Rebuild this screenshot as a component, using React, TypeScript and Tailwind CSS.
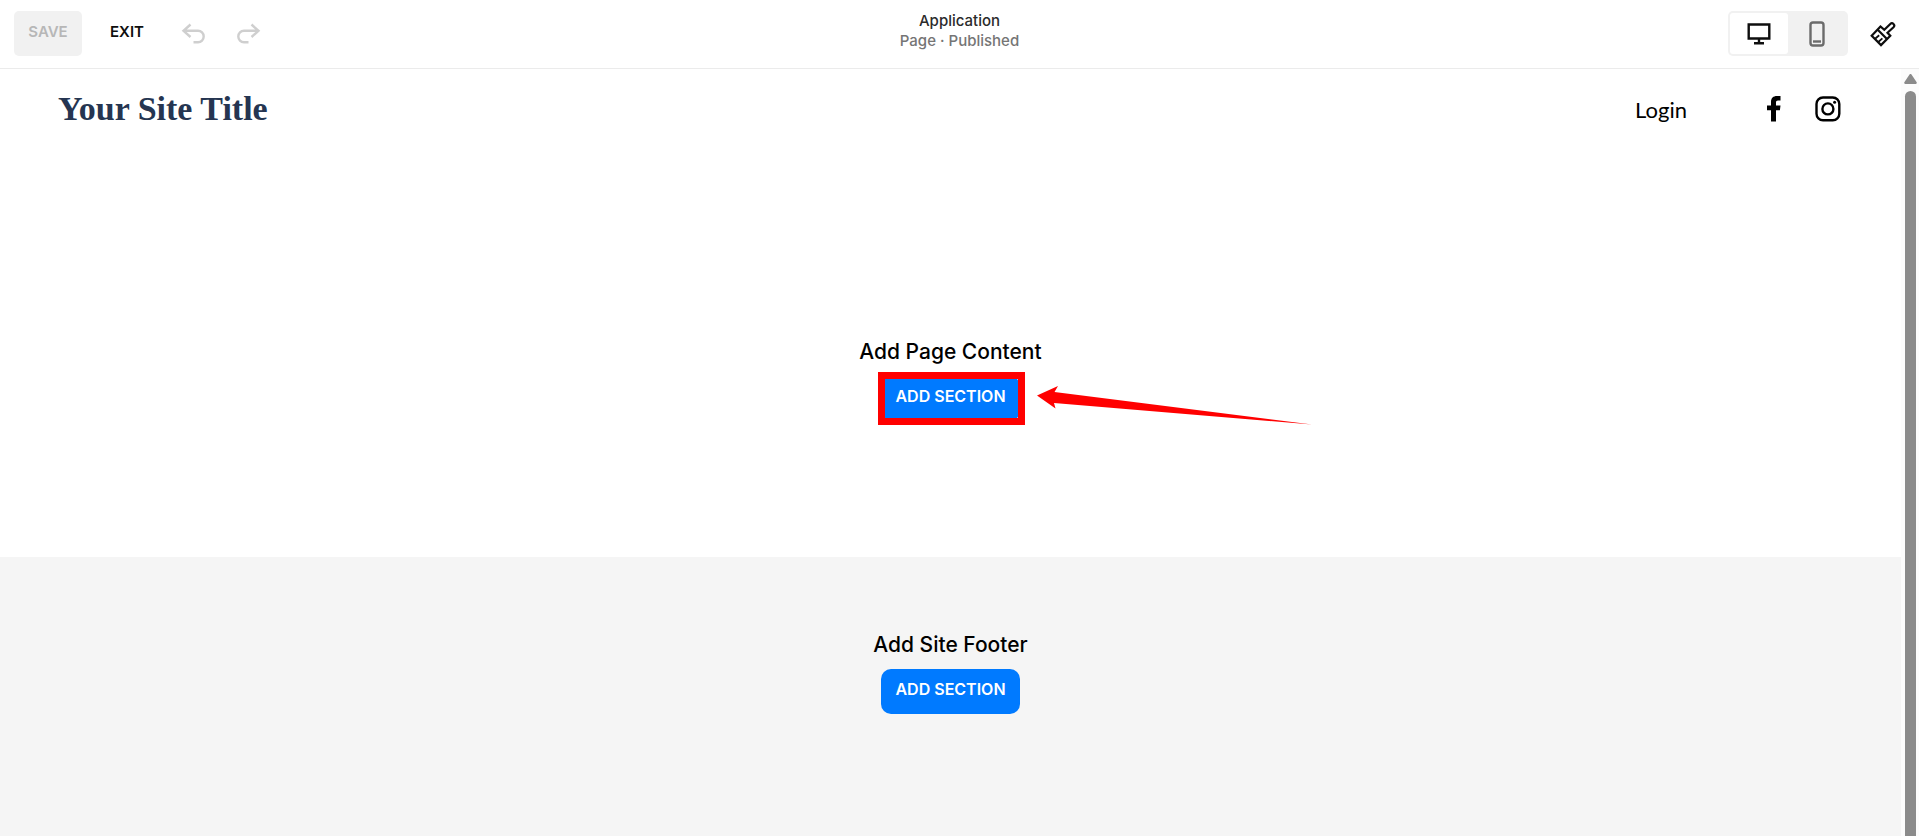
import { useState } from "react";

type Device = "desktop" | "mobile";

function UndoIcon() {
  return (
    <svg width="24" height="22" viewBox="0 0 24 22" fill="none" stroke="currentColor" strokeWidth="2.4">
      <path d="M9.500 1.500 2.500 7.800l7 6.200M3 7.800h14a5.700 5.700 0 0 1 0 11.400h-4.500" />
    </svg>
  );
}

function DesktopIcon() {
  return (
    <svg width="24" height="22" viewBox="0 0 24 22" fill="none" stroke="currentColor" strokeWidth="2.4">
      <path d="M1.700 1.500h20.600v14H1.700zM12 15.500V20M7 20.300h10" />
    </svg>
  );
}

function MobileIcon() {
  return (
    <svg width="16" height="26" viewBox="0 0 16 26" fill="none" stroke="currentColor" strokeWidth="2.4">
      <rect x="1.500" y="1.500" width="13" height="23" rx="2.500" />
      <path d="M4 20.500h8" />
    </svg>
  );
}

function BrushIcon() {
  return (
    <svg width="26" height="26" viewBox="0 0 26 26" fill="none" stroke="currentColor" strokeWidth="2.2">
      <path d="M10.500 5.500 1.700 14.800l9.300 9.300 9.300-9.300-2.800-3 6-5.600a2.200 2.200 0 0 0-3.200-3.200l-6 5.800z" />
      <path d="m7.500 8.500 9.500 9.500" />
      <path strokeWidth="1.800" d="m4.800 18 4.400-3.800M8 21.200l4.400-3.800" />
    </svg>
  );
}

function FacebookIcon() {
  return (
    <svg width="14" height="26" viewBox="0 0 14 26" fill="currentColor">
      <path d="M4 25.500V14.200H0V9.500h4V6c0-4 2.200-6 6-6h3.500v4.500H11C9.500 4.500 9 5.200 9 6.500v3h4.500l-.600 4.700H9v11.300z" />
    </svg>
  );
}

function InstagramIcon() {
  return (
    <svg width="26" height="26" viewBox="0 0 26 26" fill="none" stroke="currentColor" strokeWidth="2.400">
      <rect x="1.500" y="1.500" width="22.800" height="22.800" rx="6.500" />
      <circle cx="12.900" cy="12.900" r="5.500" />
      <circle cx="19.600" cy="6.200" r="1.500" fill="currentColor" stroke="none" />
    </svg>
  );
}

function AddSectionButton() {
  return (
    <button
      type="button"
      className="flex h-[45px] w-[139px] items-center justify-center rounded-[10px] bg-[#007aff] pb-1.5 text-base font-semibold text-white"
    >
      ADD SECTION
    </button>
  );
}

function Toolbar() {
  const [device, setDevice] = useState<Device>("desktop");

  return (
    <header className="grid grid-cols-[1fr_auto_1fr] items-start border-b border-[#ebebeb] bg-white pt-[11px] pb-3">
      <div className="flex h-[45px] items-center pl-3.5">
        <button
          type="button"
          disabled
          className="h-full w-[68px] rounded-[5px] bg-[#f1f1f1] pb-0.5 text-[15px] font-semibold text-[#b7b7b7]"
        >
          SAVE
        </button>
        <button type="button" className="ml-7 pb-0.5 text-[15px] font-semibold text-[#0e0e0e]">
          EXIT
        </button>
        <button type="button" aria-label="Undo" disabled className="ml-[37px] text-[#cfcfcf]">
          <UndoIcon />
        </button>
        <button type="button" aria-label="Redo" disabled className="ml-8 -scale-x-100 text-[#cfcfcf]">
          <UndoIcon />
        </button>
      </div>

      <div className="text-center text-[15px] leading-5 font-medium">
        <p className="text-[#2b2b2b]">Application</p>
        <p className="text-[#757575]">Page · Published</p>
      </div>

      <div className="flex h-[45px] items-center justify-end pr-[23px]">
        <div className="flex h-full rounded-[5px] bg-[#f1f1f1] p-0.5">
          <button
            type="button"
            aria-label="Desktop view"
            aria-pressed={device === "desktop"}
            onClick={() => setDevice("desktop")}
            className={`flex w-[58px] items-center justify-center rounded-[3px] ${device === "desktop" ? "bg-white text-[#0e0e0e]" : "text-[#6b6b6b]"}`}
          >
            <DesktopIcon />
          </button>
          <button
            type="button"
            aria-label="Mobile view"
            aria-pressed={device === "mobile"}
            onClick={() => setDevice("mobile")}
            className={`flex w-[58px] items-center justify-center rounded-[3px] ${device === "mobile" ? "bg-white text-[#0e0e0e]" : "text-[#6b6b6b]"}`}
          >
            <MobileIcon />
          </button>
        </div>
        <button type="button" aria-label="Site styles" className="ml-[22px] text-[#0e0e0e]">
          <BrushIcon />
        </button>
      </div>
    </header>
  );
}

function SiteHeader() {
  return (
    <div className="flex h-20 items-center justify-between pr-[60px] pl-[58px]">
      <a href="#" className="font-['Liberation_Serif',serif] text-[34px] leading-10 font-bold text-[#253551]">
        Your Site Title
      </a>
      <nav className="flex items-center text-black">
        <a href="#" className="font-['Lato',sans-serif] text-[22px]">
          Login
        </a>
        <a href="#" aria-label="Facebook" className="ml-20">
          <FacebookIcon />
        </a>
        <a href="#" aria-label="Instagram" className="ml-[34px]">
          <InstagramIcon />
        </a>
      </nav>
    </div>
  );
}

// Red frame and arrow drawn over the button
function Callout() {
  return (
    <>
      <div className="pointer-events-none absolute -top-1 -left-[3px] h-[53px] w-[147px] border-[7px] border-[#ff0000]" />
      <svg
        className="pointer-events-none absolute top-2.5 left-[156px]"
        width="276"
        height="40"
        viewBox="0 0 276 40"
        fill="#ff0000"
      >
        <path d="M0 9.500 21 0l-3.500 6L275 38.500 17 17l1.500 5.500z" />
      </svg>
    </>
  );
}

export default function App() {
  return (
    <div className="flex min-h-screen flex-col bg-white font-['Inter',sans-serif]">
      <Toolbar />

      <div className="flex flex-1">
        <div className="flex flex-1 flex-col">
          <SiteHeader />

          <main className="flex flex-col items-center pt-[189px] pb-[136px]">
            <h2 className="mb-2.5 text-[21px] leading-7 font-medium text-black">Add Page Content</h2>
            <div className="relative">
              <AddSectionButton />
              <Callout />
            </div>
          </main>

          <footer className="flex flex-1 flex-col items-center bg-[#f5f5f5] pt-[74px]">
            <h2 className="mb-2.5 text-[21px] leading-7 font-medium text-black">Add Site Footer</h2>
            <AddSectionButton />
          </footer>
        </div>

        <div className="flex w-[18px] flex-col items-center bg-[#fcfcfc] pt-[5px]" aria-hidden="true">
          <svg width="13" height="10" viewBox="0 0 13 10" fill="#8b8b8b">
            <path d="M5.500.600a1.200 1.200 0 0 1 2 0l5 7.400a1.200 1.200 0 0 1-1 2h-10a1.200 1.200 0 0 1-1-2z" />
          </svg>
          <div className="mt-[7px] w-[11px] flex-1 rounded-t-full bg-[#8b8b8b]" />
        </div>
      </div>
    </div>
  );
}
